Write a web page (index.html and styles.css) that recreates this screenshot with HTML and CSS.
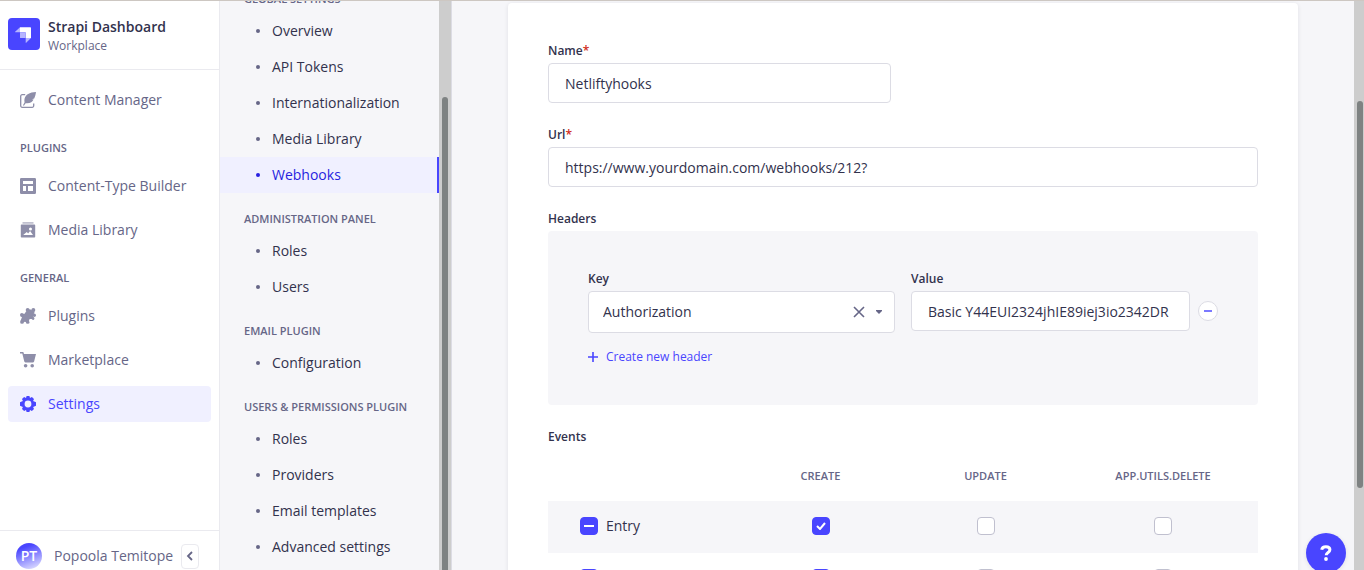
FILE: index.html
```html
<!DOCTYPE html>
<html lang="en">
<head>
<meta charset="utf-8">
<title>Strapi Dashboard - Webhooks</title>
<link rel="stylesheet" href="styles.css">
</head>
<body>
<div class="app">
  <aside class="sidebar">
    <header class="brand">
      <svg class="brand-logo" viewBox="0 0 32 32" aria-hidden="true">
        <rect width="32" height="32" rx="4" fill="#4945ff"/>
        <path d="M12 9.3h10.4c.4 0 .6.2.6.6V20h-5.3v-5.100c0-.3-.2-.6-.6-.6H12z" fill="#fff"/>
        <path d="M12 14.300h5.100c.3 0 .6.3.6.6V20h-5.100a.6.6 0 0 1-.6-.6zM12 9.300v5H7.300c-.3 0-.4-.3-.2-.5zM17.700 20H23l-4.800 4.800c-.2.2-.5.1-.5-.2z" fill="#b6b5ff"/>
      </svg>
      <div>
        <div class="brand-title">Strapi Dashboard</div>
        <div class="brand-sub">Workplace</div>
      </div>
    </header>
    <nav class="nav" aria-label="Main">
      <a class="nav-item" href="#">
        <svg viewBox="0 0 16 16"><path d="M5.200 2.700H2.200A1.500 1.500 0 0 0 .7 4.200v9.600a1.500 1.500 0 0 0 1.500 1.500h10a1.500 1.500 0 0 0 1.500-1.500v-2.300" fill="none" stroke="currentColor" stroke-width="1.300"/><path d="M16 0C9.500.1 5.500 2.800 4.600 6.600c-.4 1.600-.2 2.800 0 3.700L3 13.200l.9.5 1.700-2.500c4.300.5 6.800-1.100 8-3.600l-1.700-.3 2.300-.8C15.100 4.700 15.700 2.600 16 0z" fill="currentColor"/></svg>
        Content Manager</a>
      <h2 class="nav-heading">Plugins</h2>
      <a class="nav-item" href="#">
        <svg viewBox="0 0 16 16"><path fill="currentColor" fill-rule="evenodd" d="M1.300 0h13.400A1.300 1.300 0 0 1 16 1.300v13.400a1.300 1.300 0 0 1-1.300 1.300H1.300A1.300 1.300 0 0 1 0 14.700V1.300A1.300 1.300 0 0 1 1.300 0zM3 3v3h10V3zm0 5v5h3V8zm5 0v5h5V8z"/></svg>
        Content-Type Builder</a>
      <a class="nav-item" href="#">
        <svg viewBox="0 0 16 16"><path fill="currentColor" opacity=".55" d="M2.500 0h11v1.800h-11z"/><path fill="currentColor" fill-rule="evenodd" d="M1.500 2.600h13c.4 0 .7.300.7.700v11.500c0 .4-.3.700-.7.700h-13a.7.700 0 0 1-.7-.7V3.300c0-.4.300-.7.700-.7zM3.200 13h9.800l-2.900-4-2 2.400-1.300-1.300zM10.500 5.400a1.500 1.500 0 1 0 0 3 1.500 1.500 0 0 0 0-3z"/></svg>
        Media Library</a>
      <h2 class="nav-heading">General</h2>
      <a class="nav-item" href="#">
        <svg viewBox="0 0 16 16"><g fill="currentColor"><path d="M6 3.500l4-2.300 4.700 2.600-1.800 4.200 1.100 3.400-4.300-.3-.7 3.600-4.200-.9L2.200 15 .7 12.500 2 9 .4 6.200l4.200-.4z"/><circle cx="7.700" cy="2.100" r="2"/><circle cx="13.300" cy="2" r="2"/><circle cx="14.200" cy="7.200" r="1.800"/><circle cx="1.900" cy="7" r="1.900"/><circle cx="2" cy="13.900" r="1.900"/><circle cx="7.700" cy="13.900" r="1.900"/><circle cx="13" cy="10.500" r="1.400"/></g><circle cx="10.900" cy="12.700" r="1.800" fill="#fff"/><circle cx="10.500" cy="0" r="1.100" fill="#fff"/></svg>
        Plugins</a>
      <a class="nav-item" href="#">
        <svg viewBox="0 0 16 16"><path fill="currentColor" d="M0 0h3.300l.7 2h12l-1.900 7.600c-.1.500-.5.800-1 .800H5.300c-.5 0-.9-.3-1-.8L2.300 1.500H0z"/><circle cx="5.600" cy="13.800" r="1.800" fill="currentColor"/><circle cx="12.200" cy="13.800" r="1.800" fill="currentColor"/></svg>
        Marketplace</a>
      <a class="nav-item nav-item-active" href="#" aria-current="page">
        <svg viewBox="0 0 16 16"><path fill="currentColor" fill-rule="evenodd" d="M6.600 0h2.800l.6 2 1.900-1 2.100 2-.9 2 2.900 1.300v3.400L13.100 11l.9 2-2.100 2-1.900-1-.6 2H6.600L6 14l-1.900 1L2 13l.9-2L0 9.700V6.300L2.900 5 2 3l2.100-2L6 2zM8 4.600a3.400 3.400 0 1 0 0 6.800 3.400 3.400 0 0 0 0-6.800z"/></svg>
        Settings</a>
    </nav>
    <footer class="account">
      <span class="avatar">PT</span>
      <span class="account-name">Popoola Temitope</span>
      <button class="collapse" type="button" aria-label="Collapse the navbar"><svg viewBox="0 0 8 10"><path d="M6 1L2 5l4 4" fill="none" stroke="currentColor" stroke-width="1.800"/></svg></button>
    </footer>
  </aside>

  <div class="subnav">
    <nav class="subnav-list" aria-label="Settings">
      <h2 class="subnav-heading">Global Settings</h2>
      <a class="subnav-item" href="#">Overview</a>
      <a class="subnav-item" href="#">API Tokens</a>
      <a class="subnav-item" href="#">Internationalization</a>
      <a class="subnav-item" href="#">Media Library</a>
      <a class="subnav-item subnav-item-active" href="#" aria-current="page">Webhooks</a>
      <h2 class="subnav-heading">Administration Panel</h2>
      <a class="subnav-item" href="#">Roles</a>
      <a class="subnav-item" href="#">Users</a>
      <h2 class="subnav-heading">Email Plugin</h2>
      <a class="subnav-item" href="#">Configuration</a>
      <h2 class="subnav-heading">Users &amp; Permissions Plugin</h2>
      <a class="subnav-item" href="#">Roles</a>
      <a class="subnav-item" href="#">Providers</a>
      <a class="subnav-item" href="#">Email templates</a>
      <a class="subnav-item" href="#">Advanced settings</a>
    </nav>
    <div class="scrollbar scrollbar-subnav"><div class="thumb"></div></div>
  </div>

  <main class="main">
    <form class="card">
      <div class="two-col">
        <div class="field">
          <label class="label" for="name">Name<span class="required">*</span></label>
          <input class="input" id="name" type="text" value="Netliftyhooks">
        </div>
      </div>
      <div class="field">
        <label class="label" for="url">Url<span class="required">*</span></label>
        <input class="input" id="url" type="text" value="https://www.yourdomain.com/webhooks/212?">
      </div>
      <div class="field">
        <div class="label">Headers</div>
        <div class="headers-box">
          <div class="header-row">
            <div class="field">
              <label class="label" for="key">Key</label>
              <div class="select-box">
                <select class="select" id="key"><option>Authorization</option></select>
                <button class="clear" type="button" aria-label="Clear"><svg viewBox="0 0 12 12"><path d="M1 1l10 10M11 1L1 11" stroke="currentColor" stroke-width="1.600"/></svg></button>
                <svg class="caret" viewBox="0 0 6 4" aria-hidden="true"><path d="M0 0h6v1L3 4 0 1z" fill="currentColor"/></svg>
              </div>
            </div>
            <div class="field">
              <label class="label" for="value">Value</label>
              <div class="value-row">
                <input class="input" id="value" type="text" value="Basic Y44EUI2324jhIE89iej3io2342DR">
                <button class="remove" type="button" aria-label="Remove header"><svg viewBox="0 0 8 2"><path d="M0 0h8v2H0z" fill="currentColor"/></svg></button>
              </div>
            </div>
          </div>
          <button class="add" type="button"><svg viewBox="0 0 10 10"><path d="M5 0v10M0 5h10" stroke="currentColor" stroke-width="1.600"/></svg>Create new header</button>
        </div>
      </div>
      <div class="field">
        <div class="label">Events</div>
        <table class="events">
          <colgroup><col class="col-wide"><col class="col-mid"><col class="col-mid"><col class="col-wide"></colgroup>
          <thead>
            <tr><td></td><th scope="col">Create</th><th scope="col">Update</th><th scope="col">app.utils.delete</th></tr>
          </thead>
          <tbody>
            <tr>
              <td class="event-name"><label class="event-label"><input class="check check-mixed" type="checkbox">Entry</label></td>
              <td><input class="check" type="checkbox" aria-label="Entry create" checked></td>
              <td><input class="check" type="checkbox" aria-label="Entry update"></td>
              <td><input class="check" type="checkbox" aria-label="Entry delete"></td>
            </tr>
            <tr>
              <td class="event-name"><input class="check check-mixed" type="checkbox" aria-label="All events"></td>
              <td><input class="check" type="checkbox" aria-label="Create" checked></td>
              <td><input class="check" type="checkbox" aria-label="Update"></td>
              <td><input class="check" type="checkbox" aria-label="Delete"></td>
            </tr>
          </tbody>
        </table>
      </div>
    </form>
  </main>
  <div class="scrollbar scrollbar-page"><div class="thumb"></div></div>
</div>
<button class="help" type="button" aria-label="Help"><svg viewBox="0 0 12 16"><path d="M1.700 4.800C2 2.700 3.600 1.700 5.900 1.700c2.400 0 4 1.200 4 3.100 0 2.700-3.700 2.600-3.700 5.400" fill="none" stroke="currentColor" stroke-width="3"/><circle cx="6" cy="14" r="1.900" fill="currentColor"/></svg></button>
</body>
</html>
```

FILE: styles.css
```css
* {
  box-sizing: border-box;
}

body {
  margin: 0;
  font-family: "Open Sans", "Noto Sans", sans-serif;
  font-size: 14px;
  line-height: 20px;
  color: #32324d;
  background: #f6f6f9;
}

button,
input,
select {
  font: inherit;
  color: inherit;
  margin: 0;
}

button {
  padding: 0;
  cursor: pointer;
}

svg {
  display: block;
  flex: none;
}

a {
  text-decoration: none;
}

h2 {
  margin: 0;
}

.app {
  display: flex;
  height: 100vh;
  overflow: hidden;
  border-top: 1px solid #cdc7c2;
}

/* Main navigation */
.sidebar {
  display: flex;
  flex-direction: column;
  flex: none;
  width: 220px;
  background: #fff;
  border-right: 1px solid #eaeaef;
}

.brand {
  display: flex;
  gap: 8px;
  padding: 17px 8px 14px;
  border-bottom: 1px solid #eaeaef;
}

.brand-logo {
  width: 32px;
  height: 32px;
}

.brand-title {
  font-weight: 600;
  line-height: 18px;
}

.brand-sub {
  font-size: 12px;
  line-height: 19px;
  color: #666687;
}

.nav {
  display: flex;
  flex: 1;
  flex-direction: column;
  gap: 8px;
  padding: 12px 8px;
}

.nav-item {
  display: flex;
  align-items: center;
  gap: 12px;
  height: 36px;
  padding: 0 12px;
  border-radius: 4px;
  color: #666687;
}

.nav-item svg {
  width: 16px;
  height: 16px;
  color: #8e8ea9;
}

.nav-item-active {
  background: #f0f0ff;
}

.nav-item-active,
.nav-item-active svg {
  color: #4945ff;
}

.nav-heading {
  padding: 14px 12px 4px;
  font-size: 11px;
  line-height: 16px;
  font-weight: 600;
  text-transform: uppercase;
  color: #666687;
}

.account {
  display: flex;
  align-items: center;
  gap: 12px;
  padding: 12px 20px 1px 16px;
  border-top: 1px solid #eaeaef;
  color: #666687;
}

.avatar {
  flex: none;
  width: 26px;
  height: 26px;
  border-radius: 50%;
  background: linear-gradient(160deg, #4945ff 20%, #fff 110%);
  color: #fff;
  font-weight: 600;
  line-height: 26px;
  text-align: center;
}

.account-name {
  flex: 1;
  min-width: 0;
  white-space: nowrap;
}

.collapse {
  display: grid;
  flex: none;
  place-items: center;
  width: 18px;
  height: 25px;
  border: 1px solid #eaeaef;
  border-radius: 4px;
  background: #fff;
}

.collapse svg {
  width: 8px;
  height: 10px;
}

/* Settings navigation */
.subnav {
  display: flex;
  flex: none;
  width: 232px;
  border-right: 1px solid #dcdce4;
}

.subnav-list {
  flex: 1;
  margin-top: -28px;
}

.subnav-heading {
  padding: 18px 24px 6px;
  font-size: 11px;
  line-height: 16px;
  font-weight: 600;
  text-transform: uppercase;
  color: #666687;
}

.subnav-item {
  display: flex;
  align-items: center;
  gap: 12px;
  height: 36px;
  padding-left: 36px;
  color: #32324d;
}

.subnav-item::before {
  content: "";
  width: 4px;
  height: 4px;
  border-radius: 50%;
  background: #666687;
}

.subnav-item-active {
  background: #f0f0ff;
  border-right: 2px solid #4945ff;
  color: #271fe0;
}

.subnav-item-active::before {
  background: #271fe0;
}

.scrollbar {
  flex: none;
  background: #cdcdcd;
}

.scrollbar-subnav {
  width: 12px;
  padding: 96px 3px 0;
}

.scrollbar-page {
  width: 10px;
  padding: 100px 1px 82px 3px;
}

.thumb {
  height: 100%;
  border-radius: 3px;
  background: #7e8282;
}

.scrollbar-subnav .thumb {
  border-radius: 3px 3px 0 0;
}

/* Form */
.main {
  flex: 1;
  min-width: 0;
  padding: 2px 56px 0;
}

.card {
  display: flex;
  flex-direction: column;
  gap: 24px;
  padding: 40px;
  border-radius: 4px;
  background: #fff;
  box-shadow: 0 1px 4px rgba(33, 33, 52, 0.1);
}

.two-col {
  display: grid;
  grid-template-columns: 1fr 1fr;
  gap: 24px;
}

.field {
  display: flex;
  flex-direction: column;
  gap: 4px;
  min-width: 0;
}

.label {
  font-size: 12px;
  line-height: 16px;
  font-weight: 600;
}

.required {
  color: #d02b20;
}

.input {
  width: 100%;
  min-width: 0;
  height: 40px;
  padding: 0 16px;
  border: 1px solid #dcdce4;
  border-radius: 4px;
  background: #fff;
}

.headers-box {
  display: flex;
  flex-direction: column;
  gap: 16px;
  padding: 40px;
  border-radius: 4px;
  background: #f6f6f9;
}

.header-row {
  display: grid;
  grid-template-columns: 1fr 1fr;
  gap: 16px;
}

.select-box {
  display: flex;
  align-items: center;
  height: 42px;
  padding: 0 12px 0 14px;
  border: 1px solid #dcdce4;
  border-radius: 4px;
  background: #fff;
  color: #666687;
}

.select {
  flex: 1;
  min-width: 0;
  padding: 0;
  border: 0;
  background: none;
  color: #32324d;
  appearance: none;
}

.clear {
  border: 0;
  background: none;
}

.clear svg {
  width: 12px;
  height: 12px;
}

.caret {
  width: 6px;
  height: 4px;
  margin-left: 11px;
}

.value-row {
  display: flex;
  align-items: center;
  gap: 8px;
}

.remove {
  display: grid;
  flex: none;
  place-items: center;
  width: 20px;
  height: 20px;
  border: 1px solid #dcdce4;
  border-radius: 50%;
  background: #fff;
  color: #7b79ff;
}

.remove svg {
  width: 8px;
  height: 2px;
}

.add {
  display: flex;
  align-items: center;
  align-self: flex-start;
  gap: 8px;
  border: 0;
  background: none;
  color: #4945ff;
  font-size: 12px;
  line-height: 16px;
}

.add svg {
  width: 10px;
  height: 10px;
}

/* Events */
.events {
  width: 100%;
  table-layout: fixed;
  border-collapse: collapse;
}

.col-wide {
  width: 190px;
}

.col-mid {
  width: 165px;
}

.events th,
.events td {
  height: 52px;
  padding: 0;
  text-align: center;
}

.events th {
  padding-top: 2px;
  font-size: 11px;
  line-height: 16px;
  font-weight: 600;
  text-transform: uppercase;
  color: #666687;
}

.events tbody td {
  padding-bottom: 2px;
}

.events tbody tr:nth-child(odd) {
  background: #f6f6f9;
}

.events .event-name {
  padding-left: 32px;
}

.event-label {
  display: flex;
  align-items: center;
  gap: 8px;
}

.check {
  display: block;
  width: 18px;
  height: 18px;
  margin: 0 auto;
  border: 1px solid #c0c0cf;
  border-radius: 4px;
  background: #fff center no-repeat;
  appearance: none;
}

.event-name .check {
  margin: 0;
}

.check:checked,
.check-mixed {
  border-color: #4945ff;
  background-color: #4945ff;
}

.check:checked {
  background-image: url("data:image/svg+xml,%3Csvg xmlns='http://www.w3.org/2000/svg' width='10' height='8'%3E%3Cpath d='M1 4l3 3 5-6' fill='none' stroke='white' stroke-width='2'/%3E%3C/svg%3E");
}

.check-mixed {
  background-image: linear-gradient(#fff, #fff);
  background-size: 10px 2px;
}

.help {
  position: fixed;
  right: 18px;
  bottom: -3px;
  display: grid;
  place-items: center;
  width: 40px;
  height: 40px;
  border: 0;
  border-radius: 50%;
  background: #4945ff;
  color: #fff;
  box-shadow: 0 1px 4px rgba(33, 33, 52, 0.1);
}

.help svg {
  width: 12px;
  height: 16px;
}
```
